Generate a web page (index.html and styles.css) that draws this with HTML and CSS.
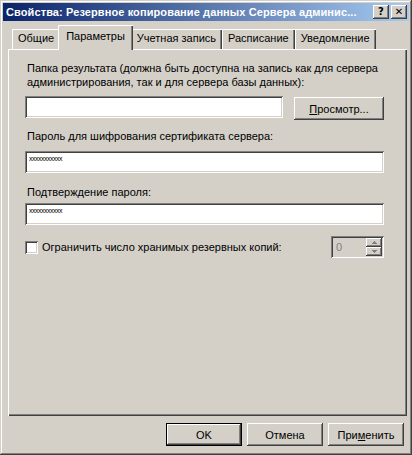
FILE: index.html
```html
<!DOCTYPE html>
<html lang="ru">
<head>
    <meta charset="UTF-8">
    <title>Свойства: Резервное копирование данных Сервера администрирования</title>
    <link rel="stylesheet" href="styles.css">
</head>
<body>

<div class="window">
    <div class="titlebar">
        <span class="title">Свойства: Резервное копирование данных Сервера админис...</span>
        <div class="title-buttons">
            <button class="title-btn">?</button>
            <button class="title-btn">&#x2715;</button>
        </div>
    </div>

    <div class="dialog-body">
        <div class="tabs">
            <div class="tab tab-first">Общие</div>
            <div class="tab tab-active">Параметры</div>
            <div class="tab">Учетная запись</div>
            <div class="tab">Расписание</div>
            <div class="tab">Уведомление</div>
        </div>

        <div class="panel">
            <p class="label label-folder">Папка результата (должна быть доступна на запись как для сервера администрирования, так и для сервера базы данных):</p>
            <div class="folder-row">
                <input type="text" class="field field-folder" value="">
                <button class="btn btn-browse"><u>П</u>росмотр...</button>
            </div>

            <p class="label label-pass">Пароль для шифрования сертификата сервера:</p>
            <input type="text" class="field field-wide field-secret" value="xxxxxxxxxxx">

            <p class="label label-confirm">Подтверждение пароля:</p>
            <input type="text" class="field field-wide field-secret" value="xxxxxxxxxxx">

            <div class="limit-row">
                <label class="check-label">
                    <span class="checkbox"></span>
                    Ограничить число хранимых резервных копий:
                </label>
                <div class="spinner">
                    <span class="spinner-value">0</span>
                    <div class="spinner-arrows">
                        <span class="spin-btn">
                            <svg width="5" height="3" viewBox="0 0 5 3"><path d="M2 0h1v1h1v1h1v1H0V2h1V1h1z" fill="#808080"/></svg>
                        </span>
                        <span class="spin-btn">
                            <svg width="5" height="3" viewBox="0 0 5 3"><path d="M0 0h5v1H4v1H3v1H2V2H1V1H0z" fill="#808080"/></svg>
                        </span>
                    </div>
                </div>
            </div>
        </div>

        <div class="actions">
            <button class="btn btn-default">OK</button>
            <button class="btn">Отмена</button>
            <button class="btn">При<u>м</u>енить</button>
        </div>
    </div>
</div>

</body>
</html>
```

FILE: styles.css
```css
body {
    margin: 0;
    padding: 0;
    background-color: #d4d0c8;
    font-family: "Liberation Sans", Arial, sans-serif;
    font-size: 11px;
    color: #000;
}

.window {
    width: 412px;
    height: 455px;
    box-sizing: border-box;
    padding: 3px;
    background-color: #d4d0c8;
    box-shadow: inset -1px -1px #404040, inset 1px 1px #d4d0c8,
                inset -2px -2px #808080, inset 2px 2px #fff;
}

/* Title bar */
.titlebar {
    height: 18px;
    display: flex;
    align-items: center;
    justify-content: space-between;
    padding: 0 2px 0 3px;
    background: linear-gradient(to right, #0a246a, #a6caf0);
    color: #fff;
}

.title {
    font-weight: bold;
    font-size: 11px;
    letter-spacing: 0.1px;
    white-space: nowrap;
}

.title-buttons {
    display: flex;
    gap: 2px;
}

.title-btn {
    width: 16px;
    height: 14px;
    padding: 0;
    border: none;
    background-color: #d4d0c8;
    box-shadow: inset -1px -1px #404040, inset 1px 1px #fff,
                inset -2px -2px #808080;
    font-family: "DejaVu Sans", sans-serif;
    font-size: 10px;
    font-weight: bold;
    line-height: 14px;
    color: #000;
}

/* Dialog body */
.dialog-body {
    padding: 4px 2px 0 5px;
}

.tabs {
    display: flex;
    align-items: flex-end;
    height: 24px;
    padding-left: 4px;
    position: relative;
    z-index: 1;
}

.tab {
    height: 20px;
    box-sizing: border-box;
    padding: 3px 6px 0 6px;
    background-color: #d4d0c8;
    box-shadow: inset 1px 1px #fff, inset -1px 0 #404040, inset -2px 0 #808080;
    white-space: nowrap;
}

.tab-active {
    height: 25px;
    margin: 0 -2px -1px -2px;
    padding: 5px 8px 0 8px;
    position: relative;
    z-index: 2;
}

.panel {
    height: 367px;
    box-sizing: border-box;
    padding: 12px 14px 0 17px;
    box-shadow: inset 1px 1px #fff, inset -1px -1px #404040, inset -2px -2px #808080;
}

.label {
    margin: 0;
    line-height: 14px;
    padding-left: 2px;
}

.label-pass {
    margin-top: 9px;
}

.label-confirm {
    margin-top: 12px;
}

.field {
    display: block;
    height: 22px;
    box-sizing: border-box;
    margin: 0;
    padding: 2px 4px;
    border: none;
    outline: none;
    background-color: #fff;
    box-shadow: inset 1px 1px #808080, inset -1px -1px #fff,
                inset 2px 2px #404040, inset -2px -2px #d4d0c8;
    font-family: "Liberation Sans", Arial, sans-serif;
    font-size: 11px;
}

.folder-row {
    display: flex;
    align-items: flex-start;
    justify-content: space-between;
    width: 359px;
    margin-top: 7px;
}

.field-folder {
    width: 258px;
}

.field-wide {
    width: 359px;
    margin-top: 8px;
}

.label-confirm + .field-wide {
    margin-top: 4px;
}

.field-secret {
    font-size: 7px;
    padding-top: 0;
    padding-bottom: 8px;
    letter-spacing: -0.5px;
    color: #000;
}

.btn {
    width: 76px;
    height: 23px;
    padding: 0;
    border: none;
    background-color: #d4d0c8;
    box-shadow: inset -1px -1px #404040, inset 1px 1px #fff,
                inset -2px -2px #808080, inset 2px 2px #d4d0c8;
    font-family: "Liberation Sans", Arial, sans-serif;
    font-size: 11px;
    color: #000;
}

.btn-browse {
    width: 90px;
    margin-top: 1px;
}

.btn-default {
    box-shadow: inset 0 0 0 1px #000, inset -2px -2px #404040,
                inset 2px 2px #fff, inset -3px -3px #808080;
}

/* Limit row */
.limit-row {
    display: flex;
    align-items: center;
    justify-content: space-between;
    margin-top: 11px;
    width: 359px;
}

.check-label {
    display: flex;
    align-items: center;
    gap: 4px;
}

.checkbox {
    width: 13px;
    height: 13px;
    box-sizing: border-box;
    background-color: #fff;
    box-shadow: inset 1px 1px #808080, inset -1px -1px #fff,
                inset 2px 2px #404040, inset -2px -2px #d4d0c8;
}

.spinner {
    width: 53px;
    height: 22px;
    box-sizing: border-box;
    display: flex;
    justify-content: space-between;
    padding: 2px 2px 2px 5px;
    background-color: #d4d0c8;
    box-shadow: inset 1px 1px #808080, inset -1px -1px #fff,
                inset 2px 2px #404040, inset -2px -2px #d4d0c8;
}

.spinner-value {
    color: #808080;
    line-height: 18px;
}

.spinner-arrows {
    display: flex;
    flex-direction: column;
    width: 16px;
}

.spin-btn {
    flex: 1;
    display: flex;
    align-items: center;
    justify-content: center;
    background-color: #d4d0c8;
    box-shadow: inset -1px -1px #404040, inset 1px 1px #fff, inset -2px -2px #808080;
}

/* Bottom buttons */
.actions {
    display: flex;
    justify-content: flex-end;
    gap: 5px;
    margin-top: 7px;
    padding-right: 3px;
}
```
